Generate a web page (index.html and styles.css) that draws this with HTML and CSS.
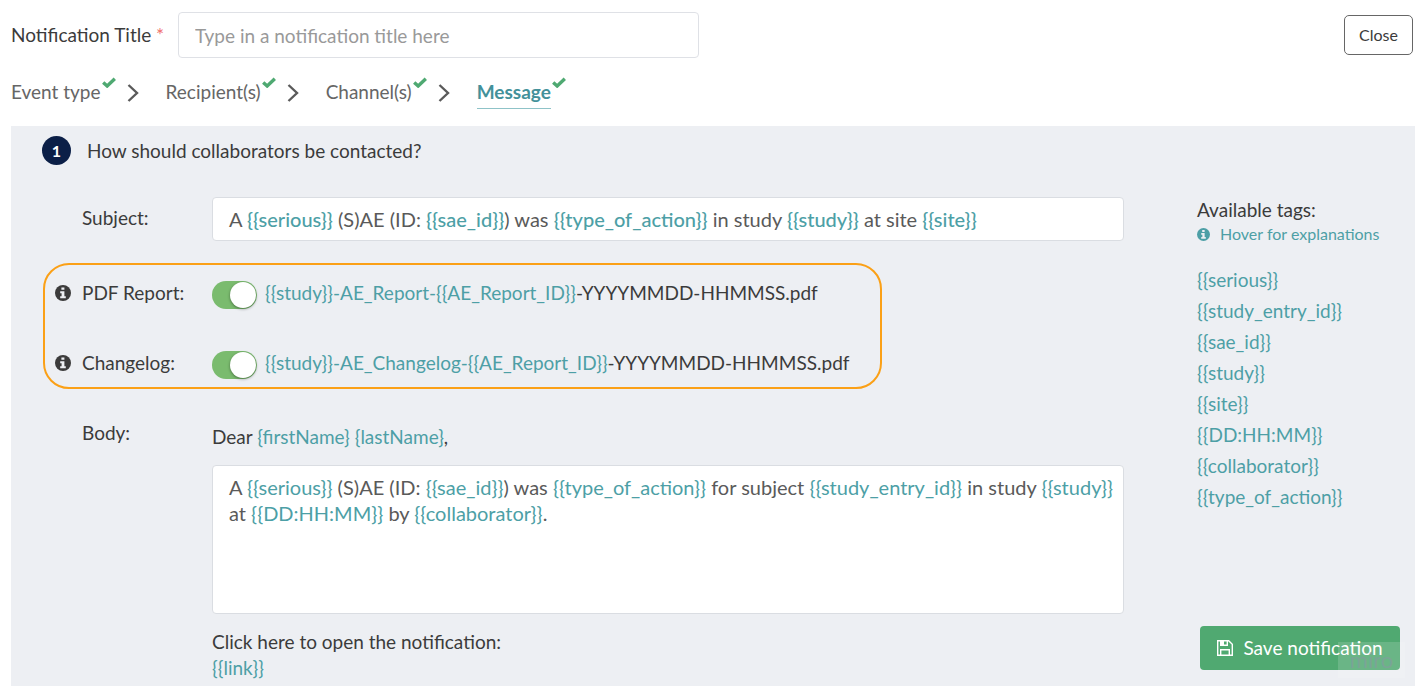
FILE: index.html
```html
<!DOCTYPE html>
<html lang="en">
<head>
<meta charset="utf-8">
<meta name="viewport" content="width=device-width, initial-scale=1">
<title>Notification message</title>
<link rel="stylesheet" href="styles.css">
</head>
<body>
<svg class="sprite" aria-hidden="true">
  <symbol id="check" viewBox="0 0 14 11"><path d="M1.2 5.400 5.200 9 12.800 1.800" fill="none" stroke="currentColor" stroke-width="3.400"/></symbol>
  <symbol id="chevron" viewBox="0 0 12 18"><path d="M1.5 1 10 9 1.5 17" fill="none" stroke="currentColor" stroke-width="2.400"/></symbol>
  <symbol id="info" viewBox="0 0 16 16"><circle cx="8" cy="8" r="8" fill="currentColor"/><path d="M6.400 2.400h3v2.400h-3zM5.200 6.200h4.200v5h1.400v2H5.200v-2h1.400v-3H5.200z" class="info-mark"/></symbol>
  <symbol id="disk" viewBox="0 0 16 16"><path d="M.7.7h11l3.600 3.600v11H.7zM3.700.7v4.600h6.600V.7M3.700 15.300V9.700h8.600v5.600" fill="none" stroke="currentColor" stroke-width="1.400"/><path d="M4 1h3v4H4z" fill="currentColor"/></symbol>
</svg>
<main class="page">
  <header class="header">
    <label class="title-label" for="title">Notification Title <span class="required">*</span></label>
    <input class="title-input" id="title" type="text" placeholder="Type in a notification title here">
    <button class="close" type="button">Close</button>
  </header>

  <nav class="steps" aria-label="Steps">
    <a class="step" href="#event">Event type</a><svg class="check"><use href="#check"/></svg>
    <svg class="chevron"><use href="#chevron"/></svg>
    <a class="step" href="#recipients">Recipient(s)</a><svg class="check"><use href="#check"/></svg>
    <svg class="chevron"><use href="#chevron"/></svg>
    <a class="step" href="#channels">Channel(s)</a><svg class="check"><use href="#check"/></svg>
    <svg class="chevron"><use href="#chevron"/></svg>
    <a class="step current" href="#message" aria-current="step">Message</a><svg class="check"><use href="#check"/></svg>
  </nav>

  <section class="panel" id="message">
    <div class="question"><span class="number">1</span><h1 class="question-text">How should collaborators be contacted?</h1></div>
    <div class="columns">
      <form class="form">
        <div class="row">
          <span class="label" id="subject-label">Subject:</span>
          <div class="editor subject" role="textbox" contenteditable="true" aria-labelledby="subject-label">A <b>{{serious}}</b> (S)AE (ID: <b>{{sae_id}}</b>) was <b>{{type_of_action}}</b> in study <b>{{study}}</b> at site <b>{{site}}</b></div>
        </div>
        <div class="attachments">
          <div class="attachment">
            <svg class="info"><use href="#info"/></svg>
            <label class="attachment-label" for="pdf">PDF Report:</label>
            <input class="switch" id="pdf" type="checkbox" role="switch" checked>
            <span class="filename"><b>{{study}}-AE_Report-{{AE_Report_ID}}</b>-YYYYMMDD-HHMMSS.pdf</span>
          </div>
          <div class="attachment">
            <svg class="info"><use href="#info"/></svg>
            <label class="attachment-label" for="changelog">Changelog:</label>
            <input class="switch" id="changelog" type="checkbox" role="switch" checked>
            <span class="filename"><b>{{study}}-AE_Changelog-{{AE_Report_ID}}</b>-YYYYMMDD-HHMMSS.pdf</span>
          </div>
        </div>
        <div class="row">
          <span class="label body-label" id="body-label">Body:</span>
          <div class="body">
            <p class="line">Dear <b>{firstName}</b> <b>{lastName}</b>,</p>
            <div class="editor multiline" role="textbox" aria-multiline="true" contenteditable="true" aria-labelledby="body-label">A <b>{{serious}}</b> (S)AE (ID: <b>{{sae_id}}</b>) was <b>{{type_of_action}}</b> for subject <b>{{study_entry_id}}</b> in study <b>{{study}}</b> at <b>{{DD:HH:MM}}</b> by <b>{{collaborator}}</b>.</div>
            <p class="line">Click here to open the notification:<br><b>{{link}}</b></p>
          </div>
        </div>
      </form>
      <aside class="tags">
        <h2 class="tags-title">Available tags:</h2>
        <p class="hint"><svg class="info small"><use href="#info"/></svg>Hover for explanations</p>
        <ul class="tag-list">
          <li>{{serious}}</li>
          <li>{{study_entry_id}}</li>
          <li>{{sae_id}}</li>
          <li>{{study}}</li>
          <li>{{site}}</li>
          <li>{{DD:HH:MM}}</li>
          <li>{{collaborator}}</li>
          <li>{{type_of_action}}</li>
        </ul>
        <div class="save-area">
          <button class="save" type="button"><svg class="disk"><use href="#disk"/></svg>Save notification</button>
          <span class="watermark">miro</span>
        </div>
      </aside>
    </div>
  </section>
</main>
</body>
</html>
```
FILE: styles.css
```css
* { box-sizing: border-box; }
body {
  margin: 0;
  background: #fff;
  color: #3b3b3b;
  font: 19px/26px Lato, "Open Sans", sans-serif;
}
h1, h2, p, ul { margin: 0; padding: 0; font-size: inherit; font-weight: 400; }
b { color: #4d9fa6; font-weight: 400; }
button, input { font: inherit; }
svg { flex: none; display: block; }
.sprite { position: absolute; width: 0; height: 0; }
.page { padding: 12px 12px 12px 11px; }

.header { display: flex; align-items: center; }
.title-label { flex: none; width: 167px; }
.required { color: #f0706c; }
.title-input {
  flex: 0 1 521px;
  min-width: 0;
  height: 46px;
  padding: 0 16px;
  border: 1px solid #dfe1e6;
  border-radius: 4px;
  color: #3b3b3b;
}
.title-input::placeholder { color: #999; opacity: 1; }
.close {
  margin-left: auto;
  margin-right: 2px;
  width: 69px;
  height: 40px;
  padding: 0;
  border: 1px solid #666;
  border-radius: 5px;
  background: #fff;
  color: #3b3b3b;
  font-size: 16px;
}

.steps { display: flex; align-items: center; margin-top: 17px; height: 51px; padding-bottom: 16px; }
.step { color: #666; text-decoration: none; line-height: 32px; border-bottom: 1px solid transparent; }
.current { color: #43919a; font-weight: 700; border-color: #8fc3c8; }
.check { width: 14px; height: 11px; margin: 0 0 21px 1px; color: #4fa972; }
.chevron { width: 12px; height: 18px; margin: 0 27px 0 11px; color: #5a5a5a; }

.panel { padding: 10px 15px 5px 31px; background: #edeff3; }
.question { display: flex; align-items: center; gap: 16px; height: 29px; }
.number {
  width: 29px;
  height: 29px;
  border-radius: 50%;
  background: #0b1f47;
  color: #fff;
  font-size: 16px;
  font-weight: 700;
  line-height: 29px;
  text-align: center;
}
.columns { display: flex; gap: 73px; margin-top: 32px; }
.form { flex: 1; min-width: 0; }
.row { display: grid; grid-template-columns: 130px minmax(0, 1fr); padding-left: 40px; }
.label { padding-top: 8px; }
.body-label { padding-top: 0; }
.editor {
  min-height: 44px;
  padding: 8px 8px 8px 16px;
  border: 1px solid #dadde2;
  border-radius: 4px;
  background: #fff;
  color: #5a5a5a;
  font-size: 20px;
}
.subject b { font-weight: 500; }
.multiline { min-height: 149px; margin: 15px 0; }
.attachments {
  display: grid;
  gap: 26px;
  max-width: 839px;
  margin: 22px 0 31px 1px;
  padding: 6px 10px 2px;
  border: 2px solid #fba016;
  border-radius: 26px;
}
.attachment { display: flex; align-items: center; height: 44px; }
.info { width: 16px; height: 16px; margin-right: 11px; }
.info-mark { fill: #edeff3; }
.attachment-label { width: 130px; }
.switch {
  appearance: none;
  flex: none;
  display: flex;
  justify-content: flex-end;
  width: 45px;
  height: 28px;
  margin: 4px 8px 0 0;
  padding: 1px;
  border-radius: 14px;
  background: #ccc;
}
.switch::before {
  content: "";
  width: 26px;
  height: 26px;
  border-radius: 50%;
  background: #fff;
  box-shadow: 0 1px 3px #0006;
}
.switch:checked { background: #7abb6e; }
.switch:not(:checked) { justify-content: flex-start; }
.body { padding-top: 4px; }

.tags { display: flex; flex-direction: column; width: 203px; }
.tags-title { line-height: 25px; }
.hint { display: flex; align-items: center; color: #4d9fa6; font-size: 16px; line-height: 24px; white-space: nowrap; }
.small { width: 13px; height: 13px; margin-right: 10px; }
.tag-list { margin-top: 18px; color: #4d9fa6; line-height: 31px; list-style: none; }
.save-area { position: relative; margin: auto 0 11px 3px; }
.save {
  display: flex;
  align-items: center;
  justify-content: center;
  gap: 10px;
  width: 100%;
  height: 44px;
  padding: 0;
  border: 0;
  border-radius: 4px;
  background: #50a971;
  color: #fff;
  white-space: nowrap;
}
.disk { width: 16px; height: 16px; }
.watermark {
  position: absolute;
  right: -5px;
  bottom: -8px;
  width: 67px;
  height: 36px;
  background: #ffffff26;
  color: #8c93a880;
  font-size: 22px;
  line-height: 36px;
  text-align: center;
}
```
